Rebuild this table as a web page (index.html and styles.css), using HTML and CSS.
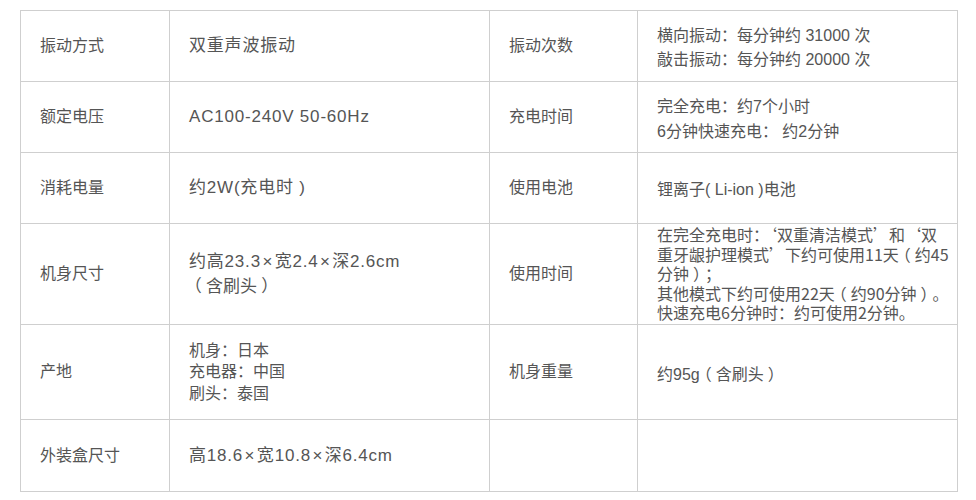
FILE: index.html
```html
<!DOCTYPE html>
<html lang="zh-CN">
<head>
<meta charset="utf-8">
<title>规格参数</title>
<link rel="stylesheet" href="styles.css">
</head>
<body>
<table class="spec">
  <colgroup>
    <col class="c-label">
    <col class="c-value">
    <col class="c-label2">
    <col class="c-value2">
  </colgroup>
  <tbody>
    <tr class="r1">
      <td class="label">振动方式</td>
      <td class="value">双重声波振动</td>
      <td class="label">振动次数</td>
      <td class="value2 lh24">横向振动：每分钟约 31000 次<br>敲击振动：每分钟约 20000 次</td>
    </tr>
    <tr class="r2">
      <td class="label">额定电压</td>
      <td class="value">AC100-240V 50-60Hz</td>
      <td class="label">充电时间</td>
      <td class="value2 lh25">完全充电：约7个小时<br>6分钟快速充电： 约2分钟</td>
    </tr>
    <tr class="r3">
      <td class="label">消耗电量</td>
      <td class="value">约2W(充电时 )</td>
      <td class="label">使用电池</td>
      <td class="value2">锂离子( Li-ion )电池</td>
    </tr>
    <tr class="r4">
      <td class="label">机身尺寸</td>
      <td class="value lh23">约高23.3<span class="x">×</span>宽2.4<span class="x">×</span>深2.6cm<br><span class="cjk"><span class="fp">（</span>含刷头<span class="fp">）</span></span></td>
      <td class="label">使用时间</td>
      <td class="value2 cjk tight">在完全充电时：‘双重清洁模式’和‘双<br>重牙龈护理模式’下约可使用11天<span class="fp">（</span>约45<br>分钟<span class="fp">）</span>；<br>其他模式下约可使用22天<span class="fp">（</span>约90分钟<span class="fp">）</span>。<br>快速充电6分钟时：约可使用2分钟。</td>
    </tr>
    <tr class="r5">
      <td class="label">产地</td>
      <td class="value small lh21">机身：日本<br>充电器：中国<br>刷头：泰国</td>
      <td class="label">机身重量</td>
      <td class="value2">约95g<span class="cjk"><span class="fp">（</span>含刷头<span class="fp">）</span></span></td>
    </tr>
    <tr class="r6">
      <td class="label">外装盒尺寸</td>
      <td class="value">高18.6<span class="x">×</span>宽10.8<span class="x">×</span>深6.4cm</td>
      <td class="label"></td>
      <td class="value2"></td>
    </tr>
  </tbody>
</table>
</body>
</html>
```
FILE: styles.css
```css
html, body {
  background: #ffffff;
}
body {
  margin: 10px 0 0 20px;
  font-family: "Liberation Sans", "Noto Sans CJK SC", sans-serif;
  color: #555555;
}
.spec {
  border-collapse: collapse;
  table-layout: fixed;
  width: 937px;
}
.c-label { width: 149px; }
.c-value { width: 320px; }
.c-label2 { width: 148px; }
.c-value2 { width: 320px; }
.spec td {
  border: 1px solid #cfcfcf;
  padding: 0 0 0 19px;
  vertical-align: middle;
  white-space: nowrap;
  font-size: 16px;
  line-height: 20px;
}
.r1 td, .r2 td, .r3 td { height: 66px; }
.r4 td { height: 100px; }
.r5 td { height: 90px; }
.r6 td { height: 67px; }
.spec td.value {
  font-size: 17px;
  letter-spacing: 0.8px;
}
.spec td.value.small {
  font-size: 16px;
  letter-spacing: 0;
}
.spec td.value2 {
  padding-top: 4px;
}
.spec td.lh24 { line-height: 24px; }
.spec td.lh25 { line-height: 25px; }
.spec td.lh23 { line-height: 23px; }
.spec td.lh21 { line-height: 21.5px; }
.spec td.tight { line-height: 19.5px; padding-top: 0; }
.r4 td.value2 { padding-top: 0; }
.cjk {
  font-family: "Noto Sans CJK SC", sans-serif;
  letter-spacing: 0;
}
.x {
  margin: 0 1.5px;
}
.fp {
  display: inline-block;
  width: 1em;
  text-align: center;
  font-feature-settings: "halt";
}
```
